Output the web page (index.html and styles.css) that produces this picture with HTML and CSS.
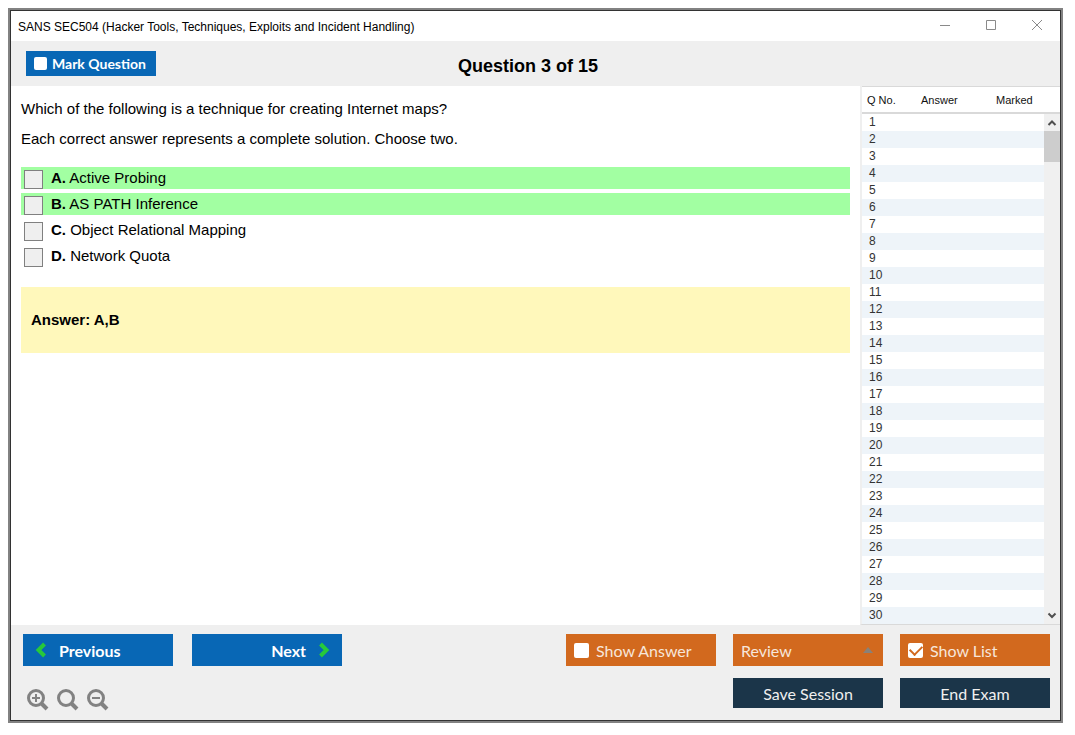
FILE: index.html
```html
<!DOCTYPE html>
<html lang="en">

<head>
  <meta charset="UTF-8">
  <meta name="viewport" content="width=device-width, initial-scale=1.0">
  <title>SANS SEC504</title>
  <link rel="stylesheet" href="styles.css">
</head>

<body>
  <div class="window">
    <div class="titlebar">
      <span class="titlebar-text">SANS SEC504 (Hacker Tools, Techniques, Exploits and Incident Handling)</span>
      <div class="window-controls">
        <button type="button" aria-label="Minimize">
          <svg width="12" height="12" viewBox="0 0 12 12"><path d="M1 6.500h10" /></svg>
        </button>
        <button type="button" aria-label="Maximize">
          <svg width="12" height="12" viewBox="0 0 12 12"><path d="M1.500 1.500h9v9h-9z" /></svg>
        </button>
        <button type="button" aria-label="Close">
          <svg width="12" height="12" viewBox="0 0 12 12"><path d="M1 1l10 10M11 1L1 11" /></svg>
        </button>
      </div>
    </div>

    <header class="header">
      <label class="mark-btn"><input type="checkbox" class="check"> Mark Question</label>
      <h1>Question 3 of 15</h1>
    </header>

    <main class="content">
      <section class="question">
        <p>Which of the following is a technique for creating Internet maps?</p>
        <p>Each correct answer represents a complete solution. Choose two.</p>

        <div class="options">
          <label class="option correct"><input type="checkbox"><span><b>A.</b> Active Probing</span></label>
          <label class="option correct"><input type="checkbox"><span><b>B.</b> AS PATH Inference</span></label>
          <label class="option"><input type="checkbox"><span><b>C.</b> Object Relational Mapping</span></label>
          <label class="option"><input type="checkbox"><span><b>D.</b> Network Quota</span></label>
        </div>

        <div class="answer-box">Answer: A,B</div>
      </section>

      <aside class="question-list">
        <table>
          <thead>
            <tr>
              <th class="col-no">Q No.</th>
              <th class="col-answer">Answer</th>
              <th>Marked</th>
            </tr>
          </thead>
          <tbody>
            <tr><td>1</td><td></td><td></td></tr>
            <tr><td>2</td><td></td><td></td></tr>
            <tr><td>3</td><td></td><td></td></tr>
            <tr><td>4</td><td></td><td></td></tr>
            <tr><td>5</td><td></td><td></td></tr>
            <tr><td>6</td><td></td><td></td></tr>
            <tr><td>7</td><td></td><td></td></tr>
            <tr><td>8</td><td></td><td></td></tr>
            <tr><td>9</td><td></td><td></td></tr>
            <tr><td>10</td><td></td><td></td></tr>
            <tr><td>11</td><td></td><td></td></tr>
            <tr><td>12</td><td></td><td></td></tr>
            <tr><td>13</td><td></td><td></td></tr>
            <tr><td>14</td><td></td><td></td></tr>
            <tr><td>15</td><td></td><td></td></tr>
            <tr><td>16</td><td></td><td></td></tr>
            <tr><td>17</td><td></td><td></td></tr>
            <tr><td>18</td><td></td><td></td></tr>
            <tr><td>19</td><td></td><td></td></tr>
            <tr><td>20</td><td></td><td></td></tr>
            <tr><td>21</td><td></td><td></td></tr>
            <tr><td>22</td><td></td><td></td></tr>
            <tr><td>23</td><td></td><td></td></tr>
            <tr><td>24</td><td></td><td></td></tr>
            <tr><td>25</td><td></td><td></td></tr>
            <tr><td>26</td><td></td><td></td></tr>
            <tr><td>27</td><td></td><td></td></tr>
            <tr><td>28</td><td></td><td></td></tr>
            <tr><td>29</td><td></td><td></td></tr>
            <tr><td>30</td><td></td><td></td></tr>
          </tbody>
        </table>
        <div class="scrollbar">
          <svg width="16" height="17" viewBox="0 0 16 17"><path d="M4.500 11L8 7.500l3.500 3.500" /></svg>
          <div class="scroll-thumb"></div>
          <svg width="16" height="17" viewBox="0 0 16 17"><path d="M4.500 6.500L8 10l3.500-3.500" /></svg>
        </div>
      </aside>
    </main>

    <footer class="footer">
      <div class="footer-left">
        <div class="nav">
          <button type="button" class="nav-btn">
            <svg width="12" height="16" viewBox="0 0 12 16"><path d="M9.500 2L3.500 8l6 6" /></svg>
            Previous
          </button>
          <button type="button" class="nav-btn next">
            Next
            <svg width="12" height="16" viewBox="0 0 12 16"><path d="M2.500 2l6 6-6 6" /></svg>
          </button>
        </div>
        <div class="zoom">
          <button type="button" aria-label="Zoom in">
            <svg width="22" height="22" viewBox="0 0 22 22">
              <circle cx="9" cy="9" r="7.500" /><path class="handle" d="M14 14l6 6" /><path class="sign" d="M5 9h8M9 5v8" />
            </svg>
          </button>
          <button type="button" aria-label="Reset zoom">
            <svg width="22" height="22" viewBox="0 0 22 22">
              <circle cx="9" cy="9" r="7.500" /><path class="handle" d="M14 14l6 6" />
            </svg>
          </button>
          <button type="button" aria-label="Zoom out">
            <svg width="22" height="22" viewBox="0 0 22 22">
              <circle cx="9" cy="9" r="7.500" /><path class="handle" d="M14 14l6 6" /><path class="sign" d="M5 9h8" />
            </svg>
          </button>
        </div>
      </div>

      <div class="actions">
        <label class="action-btn"><input type="checkbox" class="check"> Show Answer</label>
        <div class="review">
          <select class="action-btn" aria-label="Review">
            <option>Review</option>
          </select>
        </div>
        <label class="action-btn"><input type="checkbox" class="check" checked> Show List</label>
        <button type="button" class="dark-btn save">Save Session</button>
        <button type="button" class="dark-btn">End Exam</button>
      </div>
    </footer>
  </div>
</body>

</html>
```
FILE: styles.css
```css
* {
  box-sizing: border-box;
}

body {
  margin: 0;
  padding: 8px 12px 12px 8px;
  min-height: 100vh;
  display: flex;
  font-family: "Liberation Sans", Arial, sans-serif;
  font-size: 15px;
  color: #000;
  background: #fff;
}

button {
  padding: 0;
  border: none;
  background: none;
  cursor: pointer;
}

.window {
  flex: 1;
  display: flex;
  flex-direction: column;
  padding: 1px;
  border: 2px solid #828282;
  background: #333;
}

/* title bar */
.titlebar {
  display: flex;
  justify-content: space-between;
  height: 30px;
  padding-left: 7px;
  background: #fff;
  font-size: 12px;
  line-height: 32px;
}

.window-controls {
  display: flex;
}

.window-controls button {
  width: 46px;
  height: 28px;
}

.window-controls svg {
  display: block;
  margin: auto;
  fill: none;
  stroke: #8a8a8a;
}

.header {
  display: grid;
  grid-template-columns: 1fr auto 1fr;
  align-items: center;
  height: 45px;
  padding: 0 30px 0 15px;
  background: #efefef;
}

.header h1 {
  margin: 0;
  padding-top: 6px;
  font-size: 18px;
}

.mark-btn {
  justify-self: start;
  display: flex;
  align-items: center;
  gap: 5px;
  width: 130px;
  height: 25px;
  padding-left: 8px;
  background: #0867b5;
  color: #fff;
  font-family: Lato, sans-serif;
  font-size: 14px;
  font-weight: bold;
}

.check {
  appearance: none;
  flex: none;
  width: 15px;
  height: 15px;
  margin: 0;
  border-radius: 2px;
  background: #fff;
}

.mark-btn .check {
  width: 13px;
  height: 13px;
}

.check:checked {
  display: grid;
  place-items: center;
}

.check:checked::before {
  content: "";
  width: 10px;
  height: 6px;
  margin-bottom: 3px;
  border: solid #d2691e;
  border-width: 0 0 2px 2px;
  transform: rotate(-45deg);
}

/* question */
.content {
  flex: 1;
  display: flex;
  background: #fff;
}

.question {
  flex: 1;
  padding: 8px 10px;
}

.question p {
  margin: 0;
  line-height: 30px;
}

.options {
  display: flex;
  flex-direction: column;
  gap: 4px;
  padding: 13px 0 20px;
}

.option {
  display: flex;
  align-items: flex-end;
  gap: 8px;
  height: 22px;
  padding-left: 3px;
  line-height: 22px;
}

.option.correct {
  background: #a2ffa2;
}

.option input {
  appearance: none;
  width: 19px;
  height: 19px;
  margin: 0;
  border: 1px solid #808080;
  background: #efefef;
}

.answer-box {
  padding: 24px 10px;
  background: #fff8bb;
  font-weight: bold;
  line-height: 18px;
}

/* list on the right */
.question-list {
  position: relative;
  width: 200px;
  border-left: 2px solid #efefef;
  border-bottom: 1px solid #d9d9d9;
}

.question-list table {
  width: 100%;
  table-layout: fixed;
  border-collapse: separate;
  border-spacing: 0;
  font-size: 12px;
  color: #333;
}

.question-list th {
  height: 28px;
  padding: 0;
  border-top: 1px solid #d9d9d9;
  border-bottom: 2px solid #d9d9d9;
  text-align: left;
  font-size: 11px;
  font-weight: normal;
  color: #111;
}

.question-list th:first-child {
  padding-left: 5px;
}

.col-no {
  width: 59px;
}

.col-answer {
  width: 75px;
}

.question-list td {
  height: 17px;
  padding: 0 0 0 7px;
  line-height: 17px;
}

.question-list tbody tr:nth-child(even) {
  background: #eef4f9;
}

.scrollbar {
  position: absolute;
  top: 28px;
  right: 0;
  bottom: 0;
  display: flex;
  flex-direction: column;
  width: 16px;
  background: #f0f0f0;
}

.scrollbar svg {
  fill: none;
  stroke: #505050;
  stroke-width: 2;
}

.scroll-thumb {
  height: 31px;
  margin-bottom: auto;
  background: #cdcdcd;
}

/* footer */
.footer {
  display: flex;
  justify-content: space-between;
  padding: 9px 10px 9px 12px;
  background: #efefef;
  font-family: Lato, sans-serif;
}

.nav {
  display: flex;
  gap: 19px;
}

.nav-btn {
  display: flex;
  align-items: center;
  gap: 12px;
  width: 150px;
  height: 32px;
  padding: 0 12px;
  background: #0867b5;
  color: #fff;
  font-family: Lato, sans-serif;
  font-size: 16px;
  font-weight: bold;
}

.nav-btn.next {
  justify-content: flex-end;
}

.nav-btn svg {
  fill: none;
  stroke: #27c93a;
  stroke-width: 4;
}

.zoom {
  display: flex;
  gap: 8px;
  padding: 23px 0 0 4px;
}

.zoom svg {
  display: block;
  fill: none;
  stroke: #828282;
  stroke-width: 3;
}

.zoom .handle {
  stroke-width: 4;
}

.zoom .sign {
  stroke-width: 2;
}

.actions {
  display: grid;
  grid-template-columns: repeat(3, 150px);
  grid-template-rows: 32px 30px;
  gap: 12px 17px;
}

.action-btn {
  display: flex;
  align-items: center;
  gap: 7px;
  width: 100%;
  height: 32px;
  padding: 0 8px;
  border: none;
  border-radius: 0;
  background: #d2691e;
  color: #f7e6da;
  font-family: Lato, sans-serif;
  font-size: 16px;
}

.review {
  position: relative;
}

.review select {
  appearance: none;
}

.review::after {
  content: "";
  position: absolute;
  top: 13px;
  right: 10px;
  border: solid transparent;
  border-width: 0 5px 6px;
  border-bottom-color: #8a8178;
}

.dark-btn {
  background: #1b3549;
  color: #f0f0f0;
  font-family: Lato, sans-serif;
  font-size: 16px;
}

.save {
  grid-column: 2;
}
```
